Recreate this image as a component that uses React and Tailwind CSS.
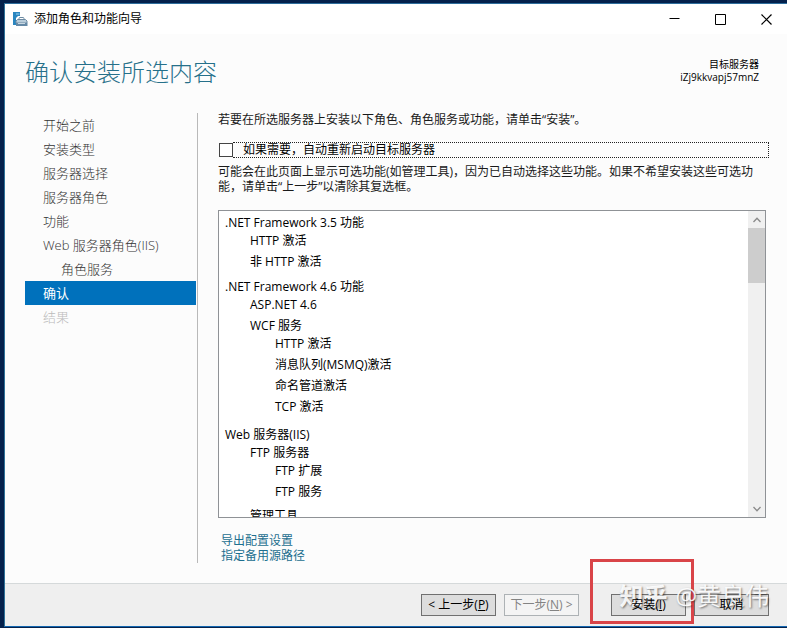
import React from "react";

const steps = [
  { label: "开始之前" },
  { label: "安装类型" },
  { label: "服务器选择" },
  { label: "服务器角色" },
  { label: "功能" },
  { label: "Web 服务器角色(IIS)" },
  { label: "角色服务", nested: true },
  { label: "确认", current: true },
  { label: "结果", disabled: true },
];

const features = [
  {
    name: ".NET Framework 3.5 功能",
    children: [{ name: "HTTP 激活" }, { name: "非 HTTP 激活" }],
  },
  {
    name: ".NET Framework 4.6 功能",
    children: [
      { name: "ASP.NET 4.6" },
      {
        name: "WCF 服务",
        children: [
          { name: "HTTP 激活" },
          { name: "消息队列(MSMQ)激活" },
          { name: "命名管道激活" },
          { name: "TCP 激活" },
        ],
      },
    ],
  },
  {
    name: "Web 服务器(IIS)",
    children: [
      {
        name: "FTP 服务器",
        children: [{ name: "FTP 扩展" }, { name: "FTP 服务" }],
      },
      { name: "管理工具" },
    ],
  },
];

function WizardIcon() {
  return (
    <svg width="15" height="15" viewBox="0 0 15 15" aria-hidden="true">
      <path d="M0 0h7v4H5L3 6v7H0z" fill="#2a86c0" />
      <path d="M3 2h3.500" stroke="#9fd0ee" strokeWidth="1" />
      <path d="M6 8V6.500q0-1 1-1h3q1 0 1 1V8" fill="none" stroke="#6d8ba3" strokeWidth="1" />
      <path d="M4.500 7.500h8l1.500 1.500v2H3V9z" fill="#b9cddb" stroke="#6d8ba3" strokeWidth="1" />
      <path d="M3 11h11.500v3H3z" fill="#6589a6" />
      <path d="M5 11.500h7" stroke="#c9d8e3" strokeWidth="1" />
    </svg>
  );
}

function FeatureTree({ items }) {
  return (
    <ul className="flex flex-col gap-[5px] pt-[2px] pb-[3px] pl-[25px]">
      {items.map((item) => (
        <li key={item.name}>
          <div>{item.name}</div>
          {item.children && <FeatureTree items={item.children} />}
        </li>
      ))}
    </ul>
  );
}

function WindowButton({ label, children }) {
  return (
    <button type="button" aria-label={label} className="flex h-[30px] w-[46px] items-center justify-center">
      <svg width="11" height="11" viewBox="0 0 11 11" fill="none" stroke="#000" aria-hidden="true">
        {children}
      </svg>
    </button>
  );
}

function ActionButton({ children, disabled }) {
  return (
    <button
      type="button"
      disabled={disabled}
      className="h-[22px] w-[75px] border border-[#707070] bg-[#dddddd] text-center leading-5 whitespace-nowrap text-black disabled:border-[#adb2b5] disabled:bg-[#f4f4f4] disabled:text-[#838383]"
    >
      <span className="relative z-10">{children}</span>
    </button>
  );
}

export default function App() {
  return (
    <div className="flex min-h-screen flex-col bg-[#04214c] pt-[3px] pb-px pl-1 font-['Open_Sans','Noto_Sans_CJK_SC',sans-serif] text-xs leading-4 text-[#1a1a1a]">
      <div className="relative flex grow flex-col border-t border-b border-l border-t-[#2d6d9c] border-b-[#1467b0] border-l-[#2d7299] bg-[#fcfcfc]">
        <header className="flex h-[30px] items-center bg-white pl-2">
          <WizardIcon />
          <div className="ml-[6px] grow text-black">添加角色和功能向导</div>
          <div className="-mr-[2px] flex">
            <WindowButton label="最小化">
              <path d="M0.500 4.500h10" />
            </WindowButton>
            <WindowButton label="最大化">
              <path d="M0.500 0.500h10v10h-10z" />
            </WindowButton>
            <WindowButton label="关闭">
              <path d="M0.500 0.500l10 10M10.500 0.500l-10 10" strokeWidth="1.200" />
            </WindowButton>
          </div>
        </header>

        <div className="flex justify-between pt-5 pr-7 pb-[22px] pl-5">
          <h1 className="text-2xl leading-9 font-light text-[#26708a]">确认安装所选内容</h1>
          <div className="pt-1 text-right text-[10px] leading-[13px] text-black">
            <div>目标服务器</div>
            <div>iZj9kkvapj57mnZ</div>
          </div>
        </div>

        <div className="flex grow pb-5 pl-5">
          <nav className="mt-px w-[173px] shrink-0 border-r border-[#b9b9b9] pr-px text-[13px] leading-6 font-light">
            {steps.map((step) => (
              <a
                key={step.label}
                href="#"
                aria-current={step.current ? "step" : undefined}
                className={
                  step.current
                    ? "block bg-[#0071bc] pl-[18px] font-normal text-white"
                    : step.disabled
                      ? "block pl-[18px] text-[#bbb]"
                      : step.nested
                        ? "block pl-9 text-[#333]"
                        : "block pl-[18px] text-[#333]"
                }
              >
                {step.label}
              </a>
            ))}
          </nav>

          <main className="min-w-0 grow pr-[18px] pl-5">
            <p>若要在所选服务器上安装以下角色、角色服务或功能，请单击“安装”。</p>

            <div className="mt-[14px] flex items-center">
              <input
                id="restart"
                type="checkbox"
                className="ml-px size-[14px] shrink-0 appearance-none border border-[#444] bg-white"
              />
              <label
                htmlFor="restart"
                className="h-4 grow border border-l-0 border-dotted border-[#222] pl-[10px] leading-[13px] text-black"
              >
                如果需要，自动重新启动目标服务器
              </label>
            </div>

            <p className="mt-[6px] pr-[6px] leading-[15px]">
              可能会在此页面上显示可选功能(如管理工具)，因为已自动选择这些功能。如果不希望安装这些可选功能，请单击“上一步”以清除其复选框。
            </p>

            <div className="mt-4 mr-[3px] flex h-[308px] border border-[#8f9296] bg-white text-black">
              <ul className="flex grow flex-col gap-[6px] overflow-hidden pt-1 pl-[6px]">
                {features.map((item) => (
                  <li key={item.name}>
                    <div>{item.name}</div>
                    <FeatureTree items={item.children} />
                  </li>
                ))}
              </ul>
              <div className="flex w-[17px] shrink-0 flex-col items-center bg-[#f0f0f0]">
                <button type="button" aria-label="向上滚动" className="flex h-[17px] w-full items-center justify-center">
                  <svg width="8" height="6" viewBox="0 0 8 6" fill="none" stroke="#8a8a8a" strokeWidth="1.300" aria-hidden="true">
                    <path d="M0.500 5L4 1.200L7.500 5" />
                  </svg>
                </button>
                <div className="h-[55px] w-full bg-[#cdcdcd]" />
                <button type="button" aria-label="向下滚动" className="mt-auto flex h-[17px] w-full items-center justify-center">
                  <svg width="8" height="6" viewBox="0 0 8 6" fill="none" stroke="#8a8a8a" strokeWidth="1.300" aria-hidden="true">
                    <path d="M0.500 1L4 4.800L7.500 1" />
                  </svg>
                </button>
              </div>
            </div>

            <div className="mt-[15px] flex flex-col items-start pl-[3px] leading-[15px] text-[#1d6f8f]">
              <a href="#">导出配置设置</a>
              <a href="#">指定备用源路径</a>
            </div>
          </main>
        </div>

        <footer className="flex h-[43px] items-center justify-end gap-2 border-t border-[#d5d9da] bg-[#efefef] pr-[18px]">
          <ActionButton>
            &lt; 上一步(<u>P</u>)
          </ActionButton>
          <ActionButton disabled>
            下一步(<u>N</u>) &gt;
          </ActionButton>
          <div className="ml-6">
            <ActionButton>
              安装(<u>I</u>)
            </ActionButton>
          </div>
          <ActionButton>取消</ActionButton>
        </footer>

        <div className="pointer-events-none absolute right-[93px] bottom-[2px] h-[65px] w-[104px] border-[3px] border-[#d94448]" />
        <div className="pointer-events-none absolute right-[18px] bottom-[14px] flex gap-[8px] text-2xl leading-8 whitespace-nowrap text-white/90 [text-shadow:1px_1px_2px_rgba(0,0,0,0.5)]">
          <span className="font-bold">知乎</span>
          <span>@黄良伟</span>
        </div>
      </div>
    </div>
  );
}
